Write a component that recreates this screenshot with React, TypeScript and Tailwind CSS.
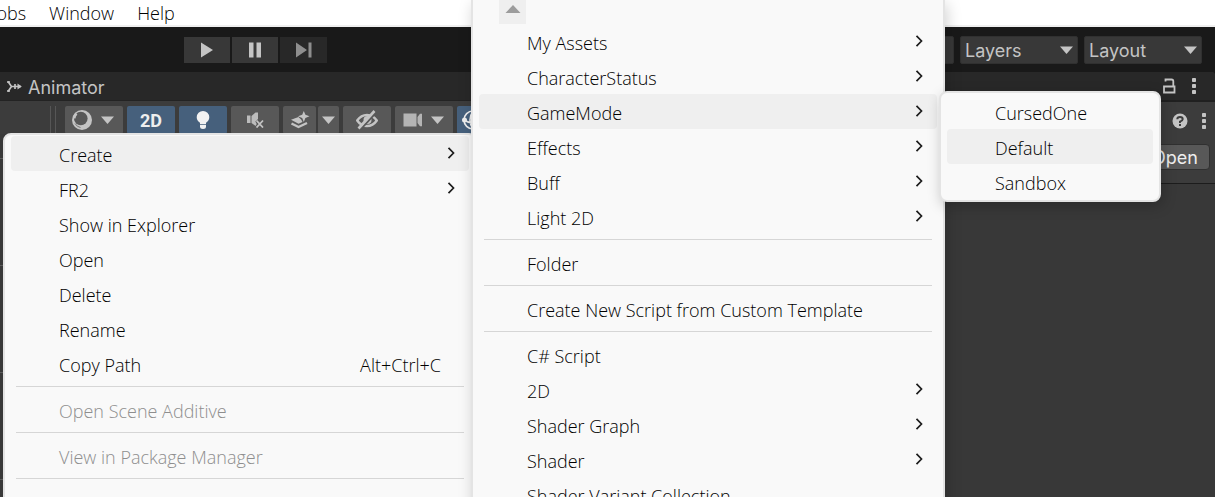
import type { ReactNode } from "react";

type Item = { label: string; sub?: boolean; active?: boolean; disabled?: boolean; shortcut?: string };
type Entry = Item | null;

const contextItems: Entry[] = [
  { label: "Create", sub: true, active: true },
  { label: "FR2", sub: true },
  { label: "Show in Explorer" },
  { label: "Open" },
  { label: "Delete" },
  { label: "Rename" },
  { label: "Copy Path", shortcut: "Alt+Ctrl+C" },
  null,
  { label: "Open Scene Additive", disabled: true },
  null,
  { label: "View in Package Manager", disabled: true },
  null,
];

const createItems: Entry[] = [
  { label: "My Assets", sub: true },
  { label: "CharacterStatus", sub: true },
  { label: "GameMode", sub: true, active: true },
  { label: "Effects", sub: true },
  { label: "Buff", sub: true },
  { label: "Light 2D", sub: true },
  null,
  { label: "Folder" },
  null,
  { label: "Create New Script from Custom Template" },
  null,
  { label: "C# Script" },
  { label: "2D", sub: true },
  { label: "Shader Graph", sub: true },
  { label: "Shader", sub: true },
  { label: "Shader Variant Collection" },
];

const modeItems: Entry[] = [{ label: "CursedOne" }, { label: "Default", active: true }, { label: "Sandbox" }];

function Chevron() {
  return (
    <svg className="mb-0.5 h-3 w-2" viewBox="0 0 8 12" fill="none" stroke="#1c1c1c" strokeWidth="1.7">
      <path d="M1.5 .8 L6.500 6 L1.500 11.200" />
    </svg>
  );
}

function MenuEntries({ entries }: { entries: Entry[] }) {
  return (
    <>
      {entries.map((e, i) =>
        e === null ? (
          <div key={i} role="separator" className="mx-[5px] my-[5px] h-px shrink-0 bg-[#d6d6d6]" />
        ) : (
          <button
            key={i}
            type="button"
            role="menuitem"
            disabled={e.disabled}
            className={`flex h-[35px] w-full shrink-0 items-center justify-between rounded pl-12 text-left whitespace-nowrap ${
              e.active ? "bg-[#efefef]" : ""
            } ${e.disabled ? "text-[#8e8e8e]" : "text-black"} ${e.shortcut ? "pr-7" : "pr-[14px]"}`}
          >
            <span className="pt-[3px]">{e.label}</span>
            {e.shortcut && <span className="pt-[3px]">{e.shortcut}</span>}
            {e.sub && <Chevron />}
          </button>
        ),
      )}
    </>
  );
}

const menuPanel =
  "absolute flex flex-col border-2 border-[#e4e4e4] bg-[#f9f9f9] px-[6px] font-['Open_Sans','Noto_Sans',sans-serif] text-[18px] font-light leading-6";

function Down() {
  return (
    <svg className="h-2 w-[13px] shrink-0" viewBox="0 0 13 8" fill="#c4c4c4">
      <path d="M0 .5h13L6.500 8z" />
    </svg>
  );
}

function Dropdown({ label }: { label: string }) {
  return (
    <label className="grid h-7 w-[118px] items-center rounded-[2px] border border-[#303030] bg-[#383838] text-[18px] text-[#c4c4c4]">
      <select aria-label={label} className="col-start-1 row-start-1 appearance-none bg-transparent pl-1 outline-none">
        <option>{label}</option>
      </select>
      <span className="pointer-events-none col-start-1 row-start-1 justify-self-end pr-1">
        <Down />
      </span>
    </label>
  );
}

function Tool({ label, width, on, children }: { label: string; width: string; on?: boolean; children: ReactNode }) {
  return (
    <button
      type="button"
      aria-label={label}
      className={`flex h-7 shrink-0 items-center justify-center gap-2 rounded-[2px] ${width} ${on ? "bg-[#46607c]" : "bg-[#585858]"}`}
    >
      {children}
    </button>
  );
}

function Kebab() {
  return (
    <svg className="h-4 w-1" viewBox="0 0 4 16" fill="#c4c4c4">
      <rect x="0" y="0" width="4" height="4" rx=".8" />
      <rect x="0" y="6" width="4" height="4" rx=".8" />
      <rect x="0" y="12" width="4" height="4" rx=".8" />
    </svg>
  );
}

function SceneTools() {
  return (
    <div className="flex h-[33px] items-start gap-1 overflow-hidden bg-[#3c3c3c] pt-[5px]">
      <div className="ml-[50px] flex h-7 w-[11px] shrink-0 gap-1">
        <i className="h-full w-px bg-[#565656]" />
        <i className="h-full w-px bg-[#565656]" />
      </div>
      <Tool label="Draw mode" width="w-[58px] pr-1">
        <svg className="h-[22px] w-[22px]" viewBox="0 0 22 22">
          <circle cx="11" cy="11" r="10" fill="#c4c4c4" />
          <circle cx="9.800" cy="9.500" r="6.800" fill="#585858" />
          <path d="M3.200 9.500A7.500 7.500 0 0 1 5.500 4.500" fill="none" stroke="#c4c4c4" strokeWidth="2.500" />
          <path d="M4 14.500Q6 18 9.500 18.500" fill="none" stroke="#777777" strokeWidth="1" />
        </svg>
        <Down />
      </Tool>
      <Tool label="2D view" width="w-[48px]" on>
        <span className="pt-0.5 font-['Roboto',sans-serif] text-[18px] leading-6 font-bold text-[#eeeeee]">2D</span>
      </Tool>
      <Tool label="Lighting" width="w-[48px]" on>
        <svg className="h-[18px] w-[14px]" viewBox="0 0 14 18" fill="#f2f2f2">
          <path d="M7 0a6.300 6.300 0 0 1 6.300 6.300c0 2.600-1.500 4.200-3.300 5.400V13H4v-1.300C2.200 10.500.7 8.900.7 6.300A6.300 6.300 0 0 1 7 0z" />
          <path d="M4 13.800h6v1.700q0 2.500-3 2.500t-3-2.500z" />
        </svg>
      </Tool>
      <Tool label="Audio" width="w-[48px]">
        <svg className="h-4 w-[18px]" viewBox="0 0 18 16">
          <path d="M1 3.500h3.500v7.500H1zM5.500 4l4-3.500h2.500v7L10.500 9v5.500L5.500 11z" fill="#bcbcbc" />
          <path d="M10.500 8.500l6.500 7M17 8.500l-6.500 7" stroke="#585858" strokeWidth="3.400" />
          <path d="M10.500 8.500l6.500 7M17 8.500l-6.500 7" stroke="#c4c4c4" strokeWidth="1.800" />
        </svg>
      </Tool>
      <div className="flex gap-0.5">
        <Tool label="Effects" width="w-[33px]">
          <svg className="h-[18px] w-[20px]" viewBox="0 0 20 18" fill="#c4c4c4">
            <path d="M13.800 0l1.600 3.800 4.100 1.500-4.100 1.600-1.600 4.100-1.600-4.100L8 5.300l4.200-1.500z" />
            <path d="M8.500 6L1 8.700l7.500 4 4-1.700-1.200-2.200z" />
            <path d="M1.500 12.500L8.500 16l8.500-4" fill="none" stroke="#c4c4c4" strokeWidth="2.400" />
          </svg>
        </Tool>
        <Tool label="Effect options" width="w-[21px]">
          <Down />
        </Tool>
      </div>
      <Tool label="Scene visibility" width="w-[48px]">
        <svg className="h-[20px] w-[22px]" viewBox="0 0 22 20" fill="none" stroke="#c4c4c4">
          <path d="M1.200 10.500Q5 5 11 5t9.800 5.500Q17 16 11 16t-9.800-5.500z" strokeWidth="2.400" />
          <circle cx="11.500" cy="10" r="4" fill="#c4c4c4" stroke="none" />
          <path d="M4.500 19.500L20 2.500" stroke="#585858" strokeWidth="2" />
          <path d="M2.500 18.500L18.500 1" strokeWidth="2.600" />
        </svg>
      </Tool>
      <Tool label="Camera" width="w-[58px] pr-0.5">
        <svg className="h-[14px] w-[20px]" viewBox="0 0 20 14" fill="#b4b4b4">
          <path d="M.5 .5h13v13H.5zM14.500 4L17 .8h2v12.400h-2L14.500 10z" />
        </svg>
        <Down />
      </Tool>
      <Tool label="Gizmos" width="w-[48px]" on>
        <svg className="h-[22px] w-[38px]" viewBox="0 0 38 22" fill="none" stroke="#eeeeee" strokeWidth="1.600">
          <circle cx="11" cy="11" r="9" />
          <path d="M2 11q9 6 18 0M11 2q-6 9 0 18" />
          <circle cx="2.500" cy="11" r="2.500" fill="#eeeeee" stroke="none" />
        </svg>
      </Tool>
    </div>
  );
}

export default function App() {
  return (
    <div className="relative flex h-screen flex-col overflow-hidden bg-[#383838] font-['Inter',sans-serif]">
      <nav className="flex h-[27px] shrink-0 items-center gap-[23px] border-b-2 border-[#f0f0f0] bg-white pt-px font-['Open_Sans','Noto_Sans',sans-serif] text-[18px] leading-6 font-light text-black">
        <button type="button" className="-ml-2">Jobs</button>
        <button type="button">Window</button>
        <button type="button">Help</button>
      </nav>

      <header className="flex h-[45px] shrink-0 items-center justify-between bg-[#191919] pr-[13px] pl-[184px]">
        <div className="flex gap-0.5">
          <button type="button" aria-label="Play" className="flex h-[26px] w-[46px] items-center justify-center bg-[#383838]">
            <svg className="h-4 w-3" viewBox="0 0 12 16" fill="#c4c4c4"><path d="M0 .5L12 8 0 15.500z" /></svg>
          </button>
          <button type="button" aria-label="Pause" className="flex h-[26px] w-[46px] items-center justify-center bg-[#383838]">
            <svg className="h-4 w-3" viewBox="0 0 12 16" fill="#c4c4c4"><path d="M0 .5h4.500v15H0zM7.500.5H12v15H7.500z" /></svg>
          </button>
          <button type="button" aria-label="Step" className="flex h-[26px] w-[47px] items-center justify-center bg-[#282828]">
            <svg className="h-4 w-4" viewBox="0 0 16 16" fill="#8e8e8e"><path d="M0 .5L11 8 0 15.500zM12.500.5H15.500v15h-3z" /></svg>
          </button>
        </div>
        <div className="flex gap-[6px]">
          <button type="button" aria-label="Search" className="h-7 w-7 rounded-[2px] border border-[#303030] bg-[#383838]" />
          <Dropdown label="Layers" />
          <Dropdown label="Layout" />
        </div>
      </header>

      <main className="flex min-h-0 flex-1 bg-[#191919]">
        <section className="flex min-w-0 flex-1 flex-col bg-[#393939]">
          <div className="flex h-[29px] shrink-0 items-center gap-[6px] border-b border-[#232323] bg-[#282828] pt-0.5 pl-[7px] text-[18px] text-[#c4c4c4]">
            <svg className="h-[14px] w-[15px]" viewBox="0 0 15 14" fill="none" stroke="#c4c4c4" strokeWidth="1.700">
              <path d="M1 1.500L4.500 6.500 1 11.500M4 6.500h10" />
              <path d="M0 2h3M0 11h3" />
              <path d="M8 4v5" />
              <path d="M10.500 3.500L14.800 6.500l-4.300 3z" fill="#c4c4c4" stroke="none" />
            </svg>
            <h2>Animator</h2>
          </div>
          <SceneTools />
          <div className="flex flex-1 flex-col overflow-hidden pt-6">
            {[0, 1, 2, 3].map((n) => (
              <div key={n} className="h-[107px] shrink-0 border-t border-[#5c5c5c]" />
            ))}
          </div>
        </section>

        <aside className="flex w-[290px] shrink-0 flex-col overflow-hidden rounded-tr bg-[#383838]">
          <div className="flex h-[30px] shrink-0 items-center justify-end gap-4 border-b-2 border-[#202020] bg-[#282828] pr-[19px]">
            <svg className="h-4 w-[14px]" viewBox="0 0 14 16" fill="none" stroke="#c4c4c4" strokeWidth="1.800">
              <path d="M2 8.500h10.500v6H2zM3.500 3.500V1.500h6q1.800 0 1.800 1.800V8.500" />
            </svg>
            <Kebab />
          </div>
          <div className="flex h-[82px] shrink-0 flex-col items-end justify-between border-b border-[#1c1c1c] bg-[#3c3c3c] pt-[11px] pb-[13px]">
            <div className="flex items-center gap-[14px] pr-[9px]">
              <svg className="h-4 w-4" viewBox="0 0 16 16">
                <circle cx="8" cy="8" r="7.500" fill="#c4c4c4" />
                <path d="M5.300 6.300Q5.300 4 8 4t2.700 2.200Q10.700 7.500 8 8.600V10" fill="none" stroke="#3c3c3c" strokeWidth="2" />
                <rect x="7" y="11" width="2" height="2" fill="#3c3c3c" />
              </svg>
              <Kebab />
            </div>
            <button type="button" className="mr-[5px] flex h-[26px] w-[70px] items-center justify-center rounded border border-[#303030] bg-[#585858] text-[18px] text-[#eeeeee]">
              Open
            </button>
          </div>
        </aside>
      </main>

      <div role="menu" aria-label="Assets" className={`${menuPanel} top-[133px] left-[3px] w-[474px] rounded-lg pt-px pb-[100px]`}>
        <MenuEntries entries={contextItems} />
      </div>

      <div
        role="menu"
        aria-label="Create"
        className={`${menuPanel} top-0 left-[471px] w-[474px] border-y-0 shadow-[2px_4px_14px_rgba(0,0,0,0.18)]`}
      >
        <button type="button" aria-label="Scroll up" className="ml-5 flex h-6 w-[27px] shrink-0 justify-center bg-[#efefef] pt-[5px]">
          <svg className="h-2 w-4" viewBox="0 0 16 8" fill="#9c9c9c"><path d="M8 0l7.500 8H.5z" /></svg>
        </button>
        <MenuEntries entries={createItems} />
      </div>

      <div
        role="menu"
        aria-label="GameMode"
        className={`${menuPanel} top-[91px] left-[939px] w-[222px] rounded-lg py-px shadow-[2px_4px_14px_rgba(0,0,0,0.22)]`}
      >
        <MenuEntries entries={modeItems} />
      </div>
    </div>
  );
}
